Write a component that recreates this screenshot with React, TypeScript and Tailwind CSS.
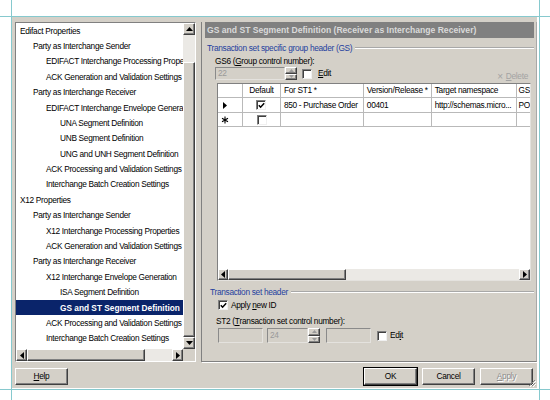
import React from "react";

type TreeItem = { level: number; label: string; selected?: boolean };

const TREE: TreeItem[] = [
  { level: 0, label: "Edifact Properties" },
  { level: 1, label: "Party as Interchange Sender" },
  { level: 2, label: "EDIFACT Interchange Processing Properties" },
  { level: 2, label: "ACK Generation and Validation Settings" },
  { level: 1, label: "Party as Interchange Receiver" },
  { level: 2, label: "EDIFACT Interchange Envelope Generation" },
  { level: 3, label: "UNA Segment Definition" },
  { level: 3, label: "UNB Segment Definition" },
  { level: 3, label: "UNG and UNH Segment Definition" },
  { level: 2, label: "ACK Processing and Validation Settings" },
  { level: 2, label: "Interchange Batch Creation Settings" },
  { level: 0, label: "X12 Properties" },
  { level: 1, label: "Party as Interchange Sender" },
  { level: 2, label: "X12 Interchange Processing Properties" },
  { level: 2, label: "ACK Generation and Validation Settings" },
  { level: 1, label: "Party as Interchange Receiver" },
  { level: 2, label: "X12 Interchange Envelope Generation" },
  { level: 3, label: "ISA Segment Definition" },
  { level: 3, label: "GS and ST Segment Definition", selected: true },
  { level: 2, label: "ACK Processing and Validation Settings" },
  { level: 2, label: "Interchange Batch Creation Settings" },
];

const INDENT = ["pl-[4px]", "pl-[17px]", "pl-[30px]", "pl-[44px]"];

// classic 3D look
const RAISED =
  "bg-[#d4d0c8] border border-t-white border-l-white border-r-[#404040] border-b-[#404040] shadow-[inset_-1px_-1px_0_#808080]";
const SUNKEN_BOX =
  "border border-t-[#8a8a8a] border-l-[#8a8a8a] border-r-[#e4e2de] border-b-[#e4e2de]";

const Arrow = ({ dir }: { dir: "up" | "down" | "left" | "right" }) => {
  const pts = {
    up: "0,4 3.5,0 7,4",
    down: "0,0 3.5,4 7,0",
    left: "4,0 0,3.5 4,7",
    right: "0,0 4,3.5 0,7",
  }[dir];
  const horiz = dir === "left" || dir === "right";
  return (
    <svg width={horiz ? 4 : 7} height={horiz ? 7 : 4} viewBox={horiz ? "0 0 4 7" : "0 0 7 4"}>
      <polygon points={pts} fill="#000" />
    </svg>
  );
};

const ArrowButton = ({ dir, className }: { dir: "up" | "down" | "left" | "right"; className: string }) => (
  <div className={`${RAISED} ${className} flex items-center justify-center shrink-0`}>
    <Arrow dir={dir} />
  </div>
);

const CheckBox = ({ checked }: { checked?: boolean }) => (
  <span className="w-[10px] h-[10px] shrink-0 bg-white border border-t-[#808080] border-l-[#808080] border-b-[#f0f0f0] border-r-[#f0f0f0] shadow-[inset_1px_1px_0_#404040] flex items-center justify-center">
    {checked && (
      <svg width="7" height="7" viewBox="0 0 7 7">
        <path d="M0.8 3.2 L2.6 5.2 L6.2 1.2" stroke="#000" strokeWidth="1.5" fill="none" />
      </svg>
    )}
  </span>
);

const Spinner = () => (
  <div className="w-[12px] h-full flex flex-col shrink-0">
    <div className={`${RAISED} flex-1 flex items-center justify-center`}>
      <svg width="5" height="3" viewBox="0 0 5 3">
        <polygon points="0,3 2.5,0 5,3" fill="#9a9a9a" />
      </svg>
    </div>
    <div className={`${RAISED} flex-1 flex items-center justify-center`}>
      <svg width="5" height="3" viewBox="0 0 5 3">
        <polygon points="0,0 2.5,3 5,0" fill="#9a9a9a" />
      </svg>
    </div>
  </div>
);

const GroupLabel = ({ children, indent }: { children: React.ReactNode; indent: string }) => (
  <div className={`flex items-center h-[12px] ${indent}`}>
    <span className="text-[#1f3f9e] whitespace-nowrap pr-[3px]">{children}</span>
    <div className="flex-1 h-[2px] border-t border-t-[#a8a8a8] border-b border-b-white" />
  </div>
);

const Tree = () => (
  <div className="w-[181px] h-[340px] shrink-0 bg-white border border-t-[#808080] border-l-[#808080] border-r-white border-b-white flex flex-col">
    <div className="flex flex-1 min-h-0">
      <div className="flex-1 min-w-0 overflow-hidden">
        {TREE.map((t, i) => (
          <div
            key={i}
            className={`h-[15.4px] flex items-center whitespace-nowrap ${INDENT[t.level]} ${
              t.selected ? "bg-[#0a246a] text-white font-bold tracking-[0px]" : "text-black"
            }`}
          >
            {t.label}
          </div>
        ))}
      </div>
      <div className="w-[12px] flex flex-col shrink-0">
        <ArrowButton dir="up" className="h-[12px]" />
        <div className="h-[27px] bg-[#ebe9e5]" />
        <div className={`${RAISED} flex-1`} />
        <ArrowButton dir="down" className="h-[12px]" />
      </div>
    </div>
    <div className="h-[12px] flex shrink-0">
      <ArrowButton dir="left" className="w-[11px]" />
      <div className={`${RAISED} w-[118px]`} />
      <div className="flex-1 bg-[#ebe9e5]" />
      <ArrowButton dir="right" className="w-[11px]" />
      <div className="w-[12px] bg-[#d4d0c8]" />
    </div>
  </div>
);

const Grid = () => {
  const cell = "border-r border-r-[#b9b9b9] h-full flex items-center whitespace-nowrap overflow-hidden";
  return (
    <div className="ml-[12px] w-[314px] h-[198px] bg-white border border-t-[#808080] border-l-[#808080] border-r-[#e4e2de] border-b-[#e4e2de] flex flex-col">
      <div className="flex-1 min-h-0 overflow-hidden">
        {/* header */}
        <div className="flex h-[14px] border-b border-b-[#b9b9b9]">
          <div className={`${cell} w-[25px]`} />
          <div className={`${cell} w-[38px] justify-center`}>Default</div>
          <div className={`${cell} w-[83px] pl-[3px]`}>For ST1 *</div>
          <div className={`${cell} w-[68px] pl-[3px]`}>Version/Release *</div>
          <div className={`${cell} w-[85px] pl-[3px]`}>Target namespace</div>
          <div className="h-full flex items-center pl-[2px]">GS</div>
        </div>
        <div className="flex h-[15px] border-b border-b-[#b9b9b9]">
          <div className={`${cell} w-[25px] pl-[5px]`}>
            <svg width="4" height="7" viewBox="0 0 4 7">
              <polygon points="0,0 4,3.5 0,7" fill="#000" />
            </svg>
          </div>
          <div className={`${cell} w-[38px] justify-center`}>
            <CheckBox checked />
          </div>
          <div className={`${cell} w-[83px] pl-[3px]`}>850 - Purchase Order</div>
          <div className={`${cell} w-[68px] pl-[3px]`}>00401</div>
          <div className={`${cell} w-[85px] pl-[3px]`}>http://schemas.micro...</div>
          <div className="h-full flex items-center pl-[2px]">PO</div>
        </div>
        <div className="flex h-[14px] border-b border-b-[#b9b9b9]">
          <div className={`${cell} w-[25px] pl-[3px]`}>
            <svg width="8" height="8" viewBox="0 0 8 8">
              <path d="M4 0.5 V7.5 M1 2.3 L7 5.7 M1 5.7 L7 2.3" stroke="#000" strokeWidth="1.1" />
            </svg>
          </div>
          <div className={`${cell} w-[38px] justify-center`}>
            <CheckBox />
          </div>
          <div className={`${cell} w-[83px]`} />
          <div className={`${cell} w-[68px]`} />
          <div className={`${cell} w-[85px]`} />
          <div className="h-full" />
        </div>
      </div>
      <div className="h-[11px] flex shrink-0">
        <ArrowButton dir="left" className="w-[10px]" />
        <div className={`${RAISED} w-[118px]`} />
        <div className="flex-1 bg-[#ebe9e5]" />
        <ArrowButton dir="right" className="w-[11px]" />
      </div>
    </div>
  );
};

const Button = ({ children, isDefault, disabled }: { children: React.ReactNode; isDefault?: boolean; disabled?: boolean }) => (
  <div
    className={`w-[53px] h-[17px] flex items-center justify-center ${RAISED} ${
      isDefault ? "outline outline-1 outline-black" : ""
    } ${disabled ? "text-[#8d8d8d] [text-shadow:1px_1px_0_#fff]" : "text-black"}`}
  >
    {children}
  </div>
);

export default function App() {
  return (
    <div className="relative w-[550px] h-[400px] bg-white overflow-hidden pt-[17px] pl-[12px] font-['Liberation_Sans',Arial,sans-serif] text-[8.3px] tracking-[-0.3px] leading-none text-black">
      {/* frame guide lines */}
      <div className="absolute left-0 right-0 top-[16px] h-px bg-[#86c9ce]" />
      <div className="absolute left-0 right-0 top-[389px] h-px bg-[#86c9ce]" />
      <div className="absolute top-0 bottom-0 left-[11px] w-px bg-[#86c9ce]" />
      <div className="absolute top-0 bottom-0 left-[539px] w-px bg-[#86c9ce]" />

      <div className="relative w-[525px] h-[371px] bg-[#d4d0c8] flex flex-col">
        <div className="flex gap-[5px] pt-[5px] pl-[3px]">
          <Tree />

          {/* right panel */}
          <div className="w-[336px] h-[340px] shrink-0 border-l border-l-[#808080] border-r border-r-[#a8a8a8] border-b border-b-[#808080] shadow-[1px_1px_0_#fff] pl-[3px] pr-[2px] flex flex-col">
            <div className="h-[16px] bg-[#808080] flex items-center pl-[2px] text-[#dadada] font-bold text-[8.6px] tracking-[0px] whitespace-nowrap">
              GS and ST Segment Definition (Receiver as Interchange Receiver)
            </div>

            <div className="mt-[4px]">
              <GroupLabel indent="pl-[2px]">Transaction set specific group header (GS)</GroupLabel>
            </div>

            <div className="mt-[1px] h-[12px] flex items-center pl-[10px]">
              GS6 (<u>G</u>roup control number):
            </div>

            <div className="h-[13px] flex items-center ml-[10px]">
              <div className={`w-[70px] h-full ${SUNKEN_BOX} bg-[#d4d0c8] flex items-center pl-[2px] text-[#9a9a9a]`}>22</div>
              <Spinner />
              <div className="ml-[5px]">
                <CheckBox />
              </div>
              <span className="ml-[6px]">
                <u>E</u>dit
              </span>
              <span className="ml-auto mr-[6px] mt-[6px] flex items-center gap-[3px] text-[#a3a3a3]">
                <span className="text-[10px]">×</span>
                <span>
                  <u>D</u>elete
                </span>
              </span>
            </div>

            <div className="mt-[3px]">
              <Grid />
            </div>

            <div className="mt-[5px]">
              <GroupLabel indent="pl-[5px]">Transaction set header</GroupLabel>
            </div>

            <div className="mt-[1px] h-[12px] flex items-center pl-[13px]">
              <CheckBox checked />
              <span className="ml-[3px]">
                Apply <u>n</u>ew ID
              </span>
            </div>

            <div className="mt-[4px] h-[12px] flex items-center pl-[11px]">
              ST2 (<u>T</u>ransaction set control number):
            </div>

            <div className="mt-[1px] h-[15px] flex items-center pl-[13px]">
              <div className={`w-[45px] h-full ${SUNKEN_BOX} bg-[#d4d0c8]`} />
              <div className={`ml-[4px] w-[41px] h-full ${SUNKEN_BOX} bg-[#d4d0c8] flex items-center pl-[2px] text-[#9a9a9a]`}>24</div>
              <Spinner />
              <div className={`ml-[6px] w-[45px] h-full ${SUNKEN_BOX} bg-[#d4d0c8]`} />
              <div className="ml-[6px]">
                <CheckBox />
              </div>
              <span className="ml-[3px]">
                Ed<u>i</u>t
              </span>
            </div>
          </div>
        </div>

        {/* bottom buttons */}
        <div className="flex items-start mt-[6px] pl-[3px] pr-[4px]">
          <div className="w-[52px]">
            <Button>
              <span>
                <u>H</u>elp
              </span>
            </Button>
          </div>
          <div className="ml-auto flex gap-[5px]">
            <Button isDefault>OK</Button>
            <Button>Cancel</Button>
            <Button disabled>
              <span>
                <u>A</u>pply
              </span>
            </Button>
          </div>
        </div>

        {/* size grip */}
        <svg className="absolute right-[1px] bottom-[1px]" width="8" height="8" viewBox="0 0 8 8">
          <path d="M7 1 L1 7 M7 4 L4 7 M7 6.5 L6.5 7" stroke="#808080" strokeWidth="1" />
          <path d="M8 2 L2 8 M8 5 L5 8" stroke="#ffffff" strokeWidth="1" />
        </svg>
      </div>
    </div>
  );
}
